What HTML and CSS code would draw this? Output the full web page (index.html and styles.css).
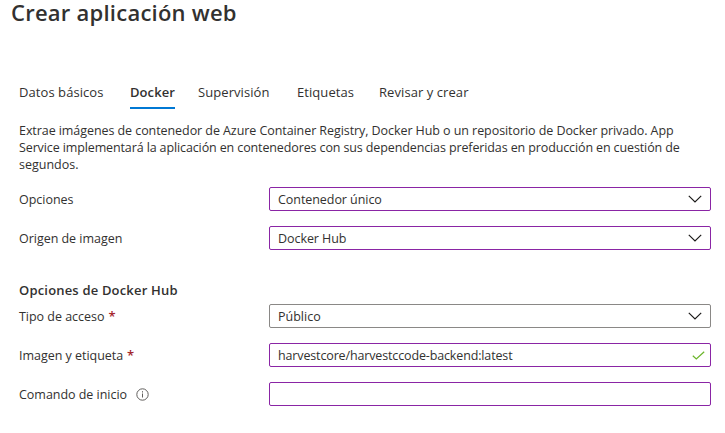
FILE: index.html
```
<!DOCTYPE html>
<html lang="es">
<head>
<meta charset="utf-8">
<title>Crear aplicación web</title>
<link rel="stylesheet" href="styles.css">
</head>
<body>
<h1 class="title">Crear aplicación web</h1>
<nav class="tabs">
  <a class="tab t1">Datos básicos</a>
  <a class="tab t2 active">Docker</a>
  <a class="tab t3">Supervisión</a>
  <a class="tab t4">Etiquetas</a>
  <a class="tab t5">Revisar y crear</a>
</nav>
<main class="content">
  <p class="intro"><span class="l1">Extrae imágenes de contenedor de Azure Container Registry, Docker Hub o un repositorio de Docker privado. App</span><br><span class="l2">Service implementará la aplicación en contenedores con sus dependencias preferidas en producción en cuestión de</span><br><span class="l3">segundos.</span></p>
  <div class="row">
    <div class="label"><span>Opciones</span></div>
    <div class="field"><span class="v1">Contenedor único</span><svg class="chevron" width="14" height="8" viewBox="0 0 14 8"><path d="M.8.9 7 7 13.2.9"/></svg></div>
  </div>
  <div class="row">
    <div class="label"><span>Origen de imagen</span></div>
    <div class="field"><span class="v2">Docker Hub</span><svg class="chevron" width="14" height="8" viewBox="0 0 14 8"><path d="M.8.9 7 7 13.2.9"/></svg></div>
  </div>
  <h2 class="section">Opciones de Docker Hub</h2>
  <div class="row">
    <div class="label"><span>Tipo de acceso</span><b class="req">*</b></div>
    <div class="field plain"><span class="v3">Público</span><svg class="chevron" width="14" height="8" viewBox="0 0 14 8"><path d="M.8.9 7 7 13.2.9"/></svg></div>
  </div>
  <div class="row">
    <div class="label"><span>Imagen y etiqueta</span><b class="req">*</b></div>
    <div class="field valid"><span class="v4">harvestcore/harvestccode-backend:latest</span><svg class="check" width="13" height="9" viewBox="0 0 13 9"><path d="M.8 4.8 4.3 8 12.2.7"/></svg></div>
  </div>
  <div class="row">
    <div class="label"><span>Comando de inicio</span><svg class="info" width="13" height="13" viewBox="0 0 13 13"><circle cx="6.5" cy="6.5" r="5.7"/><path d="M6.5 5.5v4M6.5 3.2v1.3"/></svg></div>
    <div class="field"></div>
  </div>
</main>
</body>
</html>
```
FILE: styles.css
```
* { box-sizing: border-box; }
body {
  margin: 0;
  background: #fff;
  color: #323130;
  font: 12.5px/17px "Open Sans", "Noto Sans", sans-serif;
  white-space: nowrap;
}
.title {
  margin: 0;
  padding: 0 0 0 11px;
  height: 76px;
  font-size: 22px;
  line-height: 25px;
  font-weight: 600;
  letter-spacing: .24px;
}
.tabs { display: flex; padding-left: 19px; height: 46px; font-size: 13px; letter-spacing: .07px; }
.tab { height: 33px; line-height: 32px; }
.t1 { width: 111px; }
.t2 { width: 45px; margin-right: 23px; }
.t3 { width: 99px; }
.t4 { width: 82px; }
.active { font-weight: 600; border-bottom: 2px solid #0078d4; }
.content { padding: 0 14px 0 19px; }
.intro { margin: 0 0 14px; height: 51px; }
.l1 { letter-spacing: -.07px; }
.l2 { letter-spacing: -.12px; }
.row { display: flex; height: 24px; margin-bottom: 15px; }
.label { display: flex; align-items: center; width: 250px; letter-spacing: -.03px; }
.field {
  display: flex;
  align-items: center;
  justify-content: space-between;
  width: 442px;
  padding: 0 8px;
  border: 1px solid #8a25a5;
  border-radius: 2px;
}
.v1, .v2 { letter-spacing: -.06px; }
.v4 { letter-spacing: -.14px; }
.plain { border-color: #8a8886; }
.valid { padding-right: 5px; }
.section {
  margin: 0 0 5px;
  padding-top: 17px;
  height: 34px;
  font-size: 13px;
  line-height: 17px;
  font-weight: 600;
  letter-spacing: .18px;
}
.req { margin-left: 4px; color: #a4262c; font-weight: 600; font-size: 13px; }
.chevron, .check, .info { fill: none; }
.chevron { stroke: #1b1a19; stroke-width: 1.2; }
.check { stroke: #6bb52a; stroke-width: 1.2; }
.info { margin-left: 9px; stroke: #605e5c; stroke-width: 1; }
```
